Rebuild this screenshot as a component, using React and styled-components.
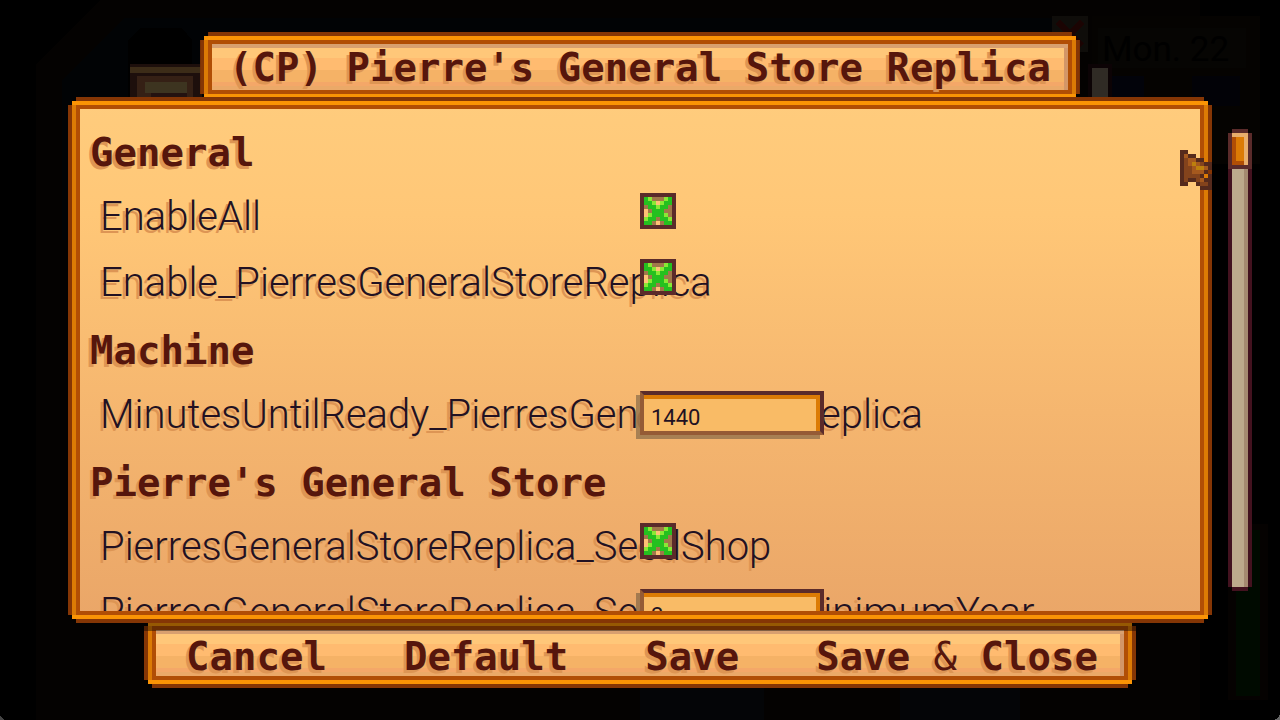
import { useState } from "react";
import styled, { createGlobalStyle } from "styled-components";

const GlobalStyle = createGlobalStyle`
  * {
    box-sizing: border-box;
  }

  body {
    margin: 0;
    background-color: #000;
    overflow: hidden;
  }
`;

const Page = styled.div`
  position: relative;
  display: flex;
  flex-direction: column;
  align-items: center;
  height: 100vh;
  padding: 32px 0px;
  overflow: hidden;
`;

const Scene = styled.svg`
  position: absolute;
  inset: 0;
  width: 100%;
  height: 100%;
`;

const Frame = styled.div`
  position: relative;
  border: 4px solid #853605;
  padding: 8px;
  box-shadow:
    inset 0 4px #fa9405,
    inset 0 -4px #fa9405,
    inset 4px 0 #dc7b05,
    inset -4px 0 #dc7b05,
    inset 0 0 0 8px #b14e05;
  clip-path: polygon(
    0 8px, 4px 8px, 4px 4px, 8px 4px, 8px 0,
    calc(100% - 8px) 0, calc(100% - 8px) 4px, calc(100% - 4px) 4px, calc(100% - 4px) 8px, 100% 8px,
    100% calc(100% - 8px), calc(100% - 4px) calc(100% - 8px), calc(100% - 4px) calc(100% - 4px), calc(100% - 8px) calc(100% - 4px), calc(100% - 8px) 100%,
    8px 100%, 8px calc(100% - 4px), 4px calc(100% - 4px), 4px calc(100% - 8px), 0 calc(100% - 8px)
  );
`;

/* the title and button bars tuck 5px under the main panel */
const Bar = styled(Frame)`
  flex: none;
  display: flex;
  align-items: flex-end;
  justify-content: center;
  height: 70px;
  margin: ${({ $below }) => ($below ? "-5px 0px 0px" : "0px 0px -5px")};
  background: linear-gradient(
    #ffc779 22px,
    #ffbb70 22px 34px,
    #f5b266 34px 46px,
    #f4a768 46px 50px,
    #eba968 50px
  );
  box-shadow:
    inset 0 4px #fa9405,
    inset 0 -4px #fa9405,
    inset 4px 0 #dc7b05,
    inset -4px 0 #dc7b05,
    inset 0 0 0 8px #b14e05,
    inset 0 12px #d8a070,
    inset -12px 0 #d39668;

  &::after {
    content: "";
    display: ${({ $below }) => ($below ? "block" : "none")};
    position: absolute;
    top: 0;
    left: -4px;
    right: -4px;
    height: 9px;
    background-color: rgba(0, 0, 0, 0.4);
  }
`;

const displayFont = `
  font-family: "DejaVu Sans Mono", monospace;
  font-weight: 700;
  font-size: 39px;
  color: #56160c;
  text-shadow: -3px 3px 0 #dd9554;
`;

const Title = styled.h1`
  ${displayFont}
  margin: 0;
  padding: 0px 17px;
  line-height: 44px;
  white-space: pre;
`;

const Middle = styled.div`
  position: relative;
  z-index: 1;
  display: flex;
  align-self: stretch;
  flex: 1;
  min-height: 0;
  gap: 16px;
  padding: 0px 28px 0px 68px;
`;

const Panel = styled(Frame)`
  flex: 1;
  min-width: 0;
  background: linear-gradient(#ffcc7d, #ffc777 22%, #f5b66f 60%, #eaa668);
`;

const OptionList = styled.div`
  height: 100%;
  overflow: hidden;
  padding: 18px 0px 0px 10px;
`;

const Heading = styled.h2`
  ${displayFont}
  height: 66px;
  margin: 0;
  line-height: 52px;
`;

const Option = styled.div`
  display: grid;
  grid-template-columns: calc(50% - 5px) 1fr;
  height: 66px;
`;

const OptionLabel = styled.label`
  padding-left: 10px;
  font-family: Roboto, sans-serif;
  font-weight: 300;
  font-size: 40px;
  line-height: 48px;
  color: #221122;
  white-space: nowrap;
  text-shadow: -3px 3px 0 #dd9554;
`;

const CheckBox = styled.div`
  position: relative;
  display: grid;
  width: 36px;
  height: 36px;
  border: 4px solid #5b2b2a;

  svg,
  input {
    grid-area: 1 / 1;
    width: 28px;
    height: 28px;
    margin: 0;
  }

  input {
    opacity: 0;
    cursor: pointer;
  }
`;

const TextBox = styled.input`
  position: relative;
  width: 184px;
  height: 44px;
  padding: 8px 7px 0px;
  border: 4px solid #5b2b2a;
  border-left-color: #955b35;
  border-bottom-color: #955b35;
  border-radius: 0;
  outline: none;
  background-color: #f9bb66;
  box-shadow:
    inset 0 4px #dc7b05,
    inset -4px 0 #dc7b05,
    -4px 4px 0 rgba(91, 75, 55, 0.5);
  font-family: Roboto, sans-serif;
  font-size: 22px;
  color: #221122;
`;

const ScrollTrack = styled.div`
  flex: none;
  width: 24px;
  margin: 32px 0px;
  border: 4px solid #43121f;
  background: linear-gradient(to right, #bdaa8c 12px, #a58a70 12px);
  clip-path: polygon(
    0 4px, 4px 4px, 4px 0, calc(100% - 4px) 0, calc(100% - 4px) 4px, 100% 4px,
    100% calc(100% - 4px), calc(100% - 4px) calc(100% - 4px), calc(100% - 4px) 100%,
    4px 100%, 4px calc(100% - 4px), 0 calc(100% - 4px)
  );
`;

const ScrollThumb = styled.div`
  height: 40px;
  margin: -4px -4px 0px;
  border: 4px solid #5b2b2a;
  background-color: #dc7b05;
  box-shadow:
    inset -4px 4px #e8ae6c,
    inset 4px -4px #b14e05;
`;

const Actions = styled.div`
  display: flex;
  gap: 77px;
  padding: 0px 26px 0px 30px;
`;

const ActionButton = styled.button`
  ${displayFont}
  padding: 0;
  border: none;
  background: none;
  line-height: 38px;
  white-space: pre;
  cursor: pointer;

  span {
    font-weight: 400;
  }
`;

const Pointer = styled.svg`
  position: absolute;
  z-index: 2;
  top: 150px;
  right: 68px;
  width: 32px;
  height: 40px;
  pointer-events: none;
`;

const checkPixels = [
  "GLbbbLG",
  "GGLfLGG",
  "bGGLGGb",
  "fbGGGbb",
  "fLGGGLb",
  "LGGbGGL",
  "GGbfbGG",
];

const pointerPixels = [
  "DD......",
  "DbDD....",
  "DmbbDD..",
  "DmbgbmDD",
  "DmmbggbD",
  "DmmbbbD.",
  "DmmmmD.D",
  "DmDDmbDD",
  "DD..DmmD",
  ".....DDD",
];

const checkColors = {
  G: "#25c01f",
  L: "#8ae835",
  b: "#a0784a",
  f: "#ffc176",
};

const pointerColors = {
  D: "#552a1c",
  m: "#83431c",
  b: "#a5591e",
  g: "#bd800d",
};

const Pixels = ({ rows, colors }) =>
  rows.flatMap((row, y) =>
    [...row].map(
      (key, x) =>
        colors[key] && (
          <rect
            key={`${x}-${y}`}
            x={x}
            y={y}
            width="1"
            height="1"
            fill={colors[key]}
          />
        )
    )
  );

const options = [
  { type: "heading", text: "General" },
  { type: "check", text: "EnableAll" },
  { type: "check", text: "Enable_PierresGeneralStoreReplica" },
  { type: "heading", text: "Machine" },
  {
    type: "text",
    text: "MinutesUntilReady_PierresGeneralStoreReplica",
    value: "1440",
  },
  { type: "heading", text: "Pierre's General Store" },
  { type: "check", text: "PierresGeneralStoreReplica_SeedShop" },
  {
    type: "text",
    text: "PierresGeneralStoreReplica_SeedShop_MinimumYear",
    value: "2",
  },
];

const CheckOption = ({ id, text }) => {
  const [checked, setChecked] = useState(true);

  return (
    <Option>
      <OptionLabel htmlFor={id}>{text}</OptionLabel>
      <CheckBox>
        {checked && (
          <svg viewBox="0 0 7 7" shapeRendering="crispEdges">
            <Pixels rows={checkPixels} colors={checkColors} />
          </svg>
        )}
        <input
          id={id}
          type="checkbox"
          checked={checked}
          onChange={(e) => setChecked(e.target.checked)}
        />
      </CheckBox>
    </Option>
  );
};

const TextOption = ({ id, text, value }) => (
  <Option>
    <OptionLabel htmlFor={id}>{text}</OptionLabel>
    <TextBox id={id} type="text" defaultValue={value} />
  </Option>
);

const Background = () => (
  <Scene
    viewBox="0 0 1280 720"
    preserveAspectRatio="xMidYMid slice"
    shapeRendering="crispEdges"
    aria-hidden="true"
  >
    <path d="M36 720V64L100 0H1200V720Z" fill="#040201" />
    <path d="M62 240V80L124 18H1080V240Z" fill="#010305" />
    <path d="M128 100V40L140 28H182L192 40V100Z" fill="#000" />
    <rect x="130" y="64" width="72" height="40" fill="#1d0f0c" />
    <rect x="130" y="67" width="72" height="6" fill="#3c2c18" />
    <rect x="137" y="76" width="56" height="24" fill="#352015" />
    <rect x="145" y="82" width="42" height="11" fill="#3d3420" />
    <rect x="151" y="93" width="36" height="4" fill="#241210" />
    <rect x="1092" y="16" width="168" height="148" fill="#050301" />
    <rect x="1098" y="28" width="148" height="40" fill="#060503" />
    <rect x="1052" y="16" width="36" height="36" fill="#0f0d0a" />
    <path d="M1058 22L1082 46M1082 22L1058 46" stroke="#1b0403" strokeWidth="6" />
    <rect x="1088" y="64" width="24" height="34" fill="#0c0305" />
    <rect x="1092" y="68" width="16" height="30" fill="#302b25" />
    <rect x="1112" y="76" width="32" height="32" fill="#02030a" />
    <rect x="1192" y="76" width="48" height="30" fill="#020207" />
    <rect x="1228" y="524" width="40" height="176" fill="#050201" />
    <rect x="1236" y="530" width="24" height="166" fill="#000a00" />
    <rect x="640" y="688" width="124" height="32" fill="#040507" />
    <rect x="900" y="688" width="120" height="32" fill="#040507" />
    <path d="M0 712Q0 720 8 720H0Z" fill="#444" />
    <path d="M1280 712Q1280 720 1272 720H1280Z" fill="#666" />
    <text
      x="1102"
      y="61"
      fontFamily="Roboto, sans-serif"
      fontSize="35"
      fill="#000"
    >
      Mon. 22
    </text>
  </Scene>
);

const App = () => {
  return (
    <Page>
      <GlobalStyle />
      <Background />

      <Bar>
        <Title>(CP) Pierre's General Store Replica</Title>
      </Bar>

      <Middle>
        <Panel>
          <OptionList>
            {options.map(({ type, text, value }) => {
              if (type === "heading") {
                return <Heading key={text}>{text}</Heading>;
              }
              return type === "check" ? (
                <CheckOption key={text} id={text} text={text} />
              ) : (
                <TextOption key={text} id={text} text={text} value={value} />
              );
            })}
          </OptionList>
        </Panel>
        <ScrollTrack>
          <ScrollThumb />
        </ScrollTrack>
      </Middle>

      <Bar $below>
        <Actions>
          <ActionButton>Cancel</ActionButton>
          <ActionButton>Default</ActionButton>
          <ActionButton>Save</ActionButton>
          <ActionButton>
            Save <span>&amp;</span> Close
          </ActionButton>
        </Actions>
      </Bar>

      <Pointer viewBox="0 0 8 10" shapeRendering="crispEdges">
        <Pixels rows={pointerPixels} colors={pointerColors} />
      </Pointer>
    </Page>
  );
};

export default App;
